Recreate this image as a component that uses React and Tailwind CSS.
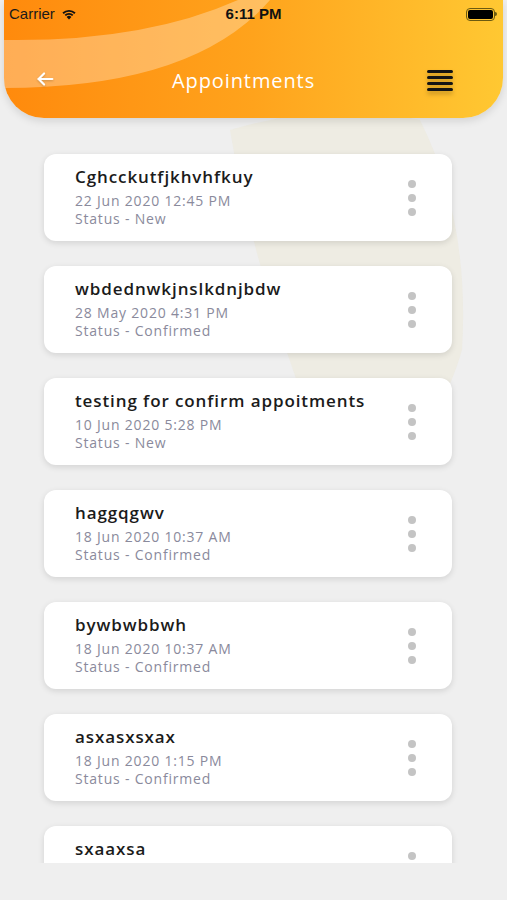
import React from "react";

const items = [
  { title: "Cghcckutfjkhvhfkuy", date: "22 Jun 2020 12:45 PM", status: "New" },
  { title: "wbdednwkjnslkdnjbdw", date: "28 May 2020 4:31 PM", status: "Confirmed" },
  { title: "testing for confirm appoitments", date: "10 Jun 2020 5:28 PM", status: "New" },
  { title: "haggqgwv", date: "18 Jun 2020 10:37 AM", status: "Confirmed" },
  { title: "bywbwbbwh", date: "18 Jun 2020 10:37 AM", status: "Confirmed" },
  { title: "asxasxsxax", date: "18 Jun 2020 1:15 PM", status: "Confirmed" },
  { title: "sxaaxsa", date: "18 Jun 2020 1:15 PM", status: "Confirmed" },
];

function Card({ item }) {
  return (
    <div className="flex items-center justify-between h-[87px] shrink-0 rounded-[12px] bg-white pl-[31px] pr-[36px] shadow-[0_2px_6px_rgba(0,0,0,0.12)]">
      <div className="flex flex-col -mt-[1px]">
        <div className="text-[17px] leading-[22px] font-semibold text-[#1b1b1b] tracking-[0.9px]">{item.title}</div>
        <div className="mt-[4px] text-[14px] leading-[18px] text-[#8a8a9c] tracking-[0.8px]">{item.date}</div>
        <div className="text-[14px] leading-[18px] text-[#8a8a9c] tracking-[0.8px]">Status - {item.status}</div>
      </div>
      <div className="flex flex-col gap-[6px]">
        <span className="w-[8px] h-[8px] rounded-full bg-[#c4c4c4]" />
        <span className="w-[8px] h-[8px] rounded-full bg-[#c4c4c4]" />
        <span className="w-[8px] h-[8px] rounded-full bg-[#c4c4c4]" />
      </div>
    </div>
  );
}

export default function App() {
  return (
    <div className="w-[507px] h-[900px] bg-[#efefef] relative overflow-hidden" style={{ fontFamily: '"Open Sans", "Noto Sans", sans-serif' }}>
      {/* faint watermark shape behind list */}
      <svg className="absolute left-0 top-[100px]" width="507" height="320" viewBox="0 0 507 320">
        <path d="M230 30 Q330 0 420 20 Q470 120 462 250 Q450 290 440 300 L300 290 Q250 150 230 30 Z" fill="#ede9da" opacity="0.6" />
      </svg>

      {/* Header */}
      <div className="relative mx-[4px] h-[118px] rounded-b-[40px] overflow-hidden bg-gradient-to-r from-[#ff8a0c] via-[#ffa31c] to-[#ffc832] shadow-[0_3px_8px_rgba(0,0,0,0.12)]">
        <svg className="absolute left-0 top-0" width="300" height="100" viewBox="0 0 300 100">
          <path d="M0 40 Q140 42 234 0 L266 0 Q190 88 0 88 Z" fill="#ffffff" opacity="0.3" />
        </svg>
        <div className="relative flex items-center justify-between h-[28px] px-[5px]">
          <div className="flex items-center gap-[6px] text-[15px] text-[#1a1a1a]" style={{ fontFamily: '"Liberation Sans", Arial, sans-serif' }}>
            <span>Carrier</span>
            <svg width="16" height="12" viewBox="0 0 16 12">
              <path d="M8 11.5 L5.6 8.9 A3.4 3.4 0 0 1 10.4 8.9 Z" fill="#111" />
              <path d="M3.6 6.8 A6.3 6.3 0 0 1 12.4 6.8 L11.1 8.1 A4.5 4.5 0 0 0 4.9 8.1 Z" fill="#111" />
              <path d="M1.4 4.6 A9.4 9.4 0 0 1 14.6 4.6 L13.3 5.9 A7.6 7.6 0 0 0 2.7 5.9 Z" fill="#111" />
            </svg>
          </div>
          <div className="absolute left-1/2 -translate-x-1/2 text-[15px] font-bold text-[#111]" style={{ fontFamily: '"Liberation Sans", Arial, sans-serif' }}>6:11 PM</div>
          <div className="flex items-center mr-[1px]">
            <div className="w-[29px] h-[13px] rounded-[4px] border border-[#6b5a10] p-[1px]">
              <div className="w-full h-full rounded-[2px] bg-black" />
            </div>
            <div className="w-[2px] h-[4px] bg-[#6b5a10] rounded-r-sm" />
          </div>
        </div>
        <div className="relative flex items-center justify-between h-[54px] mt-[26px] pl-[30px] pr-[50px]">
          <svg width="22" height="22" viewBox="0 0 24 24" fill="none" stroke="white" strokeWidth="2.4" strokeLinecap="round" strokeLinejoin="round" className="-mt-[4px] drop-shadow-[0_1px_1px_rgba(0,0,0,0.2)]">
            <path d="M20 12H5" />
            <path d="M11 6l-6 6 6 6" />
          </svg>
          <div className="absolute left-[168px] text-[20px] font-medium text-white tracking-[0.9px]">Appointments</div>
          <div className="flex flex-col gap-[3px] -mt-[2px] drop-shadow-[0_3px_2px_rgba(0,0,0,0.25)]">
            <span className="w-[26px] h-[3px] bg-[#141414] rounded-sm" />
            <span className="w-[26px] h-[3px] bg-[#141414] rounded-sm" />
            <span className="w-[26px] h-[3px] bg-[#141414] rounded-sm" />
            <span className="w-[26px] h-[3px] bg-[#141414] rounded-sm" />
          </div>
        </div>
      </div>

      {/* List */}
      <div className="relative h-[745px] overflow-hidden">
        <div className="flex flex-col gap-[25px] pt-[36px] px-[44px] pr-[55px]">
          {items.map((it, i) => (
            <Card key={i} item={it} />
          ))}
        </div>
      </div>
    </div>
  );
}
